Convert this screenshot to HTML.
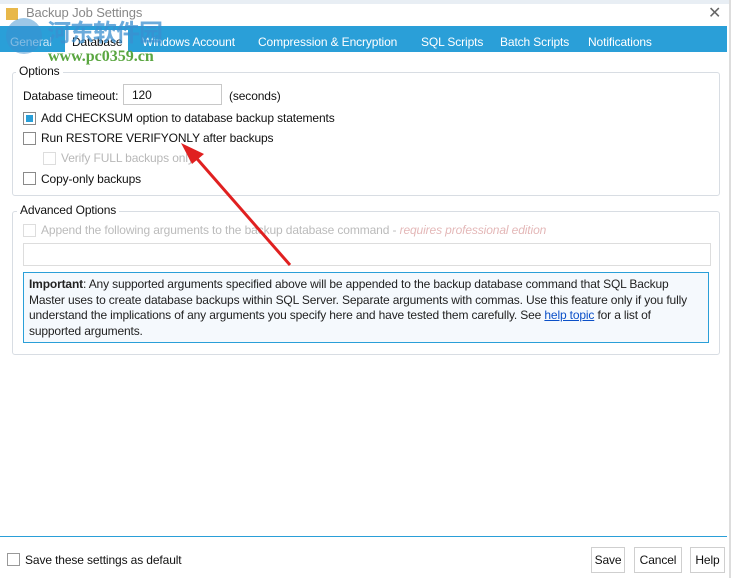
<!DOCTYPE html><html><head><style>
body{margin:0;width:731px;height:578px;background:#fff;font-family:"Liberation Sans","Noto Sans CJK SC",sans-serif;font-size:12px;color:#111;position:relative;overflow:hidden;letter-spacing:-0.12px}
.a{position:absolute;white-space:nowrap}
.cb{position:absolute;width:11px;height:11px;border:1px solid #8a8a8a;background:#fff}
.grp{position:absolute;border:1px solid #d8dde3;border-radius:3px}
.gt{position:absolute;background:#fff;padding:0 3px;font-size:12px}
.btn{position:absolute;top:547px;height:24px;border:1px solid #cfcfcf;background:#fff;text-align:center;line-height:24px;font-size:12px}
.t{font-size:12px}
</style></head><body>
<div class="a" style="left:0;top:0;width:731px;height:4px;background:#e8eef4"></div>
<div class="a" style="left:26px;top:5px;color:#888;font-size:13px">Backup Job Settings</div>
<div class="a" style="left:6px;top:8px;width:12px;height:12px;background:#e8b84a"></div>
<div class="a" style="left:708px;top:3px;font-size:16px;color:#666">✕</div>
<div class="a" style="left:0;top:26px;width:727px;height:26px;background:#2a9fd8"></div>
<div class="a" style="left:65px;top:30px;width:63px;height:22px;background:#fff"></div>
<div class="a t" style="left:10px;top:35px;color:#cfe8f6">General</div>
<div class="a t" style="left:72px;top:35px">Database</div>
<div class="a t" style="left:142px;top:35px;color:#fff">Windows Account</div>
<div class="a t" style="left:258px;top:35px;color:#fff">Compression &amp; Encryption</div>
<div class="a t" style="left:421px;top:35px;color:#fff">SQL Scripts</div>
<div class="a t" style="left:500px;top:35px;color:#fff">Batch Scripts</div>
<div class="a t" style="left:588px;top:35px;color:#fff">Notifications</div>
<div class="a" style="left:47px;top:13px;font-size:24px;font-weight:bold;color:#3b8fd0;opacity:.75;letter-spacing:-1px">河东软件园</div>
<div class="a" style="left:48px;top:48px;font-size:16px;font-weight:bold;color:#5aa640;font-family:'Liberation Serif',serif;letter-spacing:0">www.pc0359.cn</div>
<div class="a" style="left:6px;top:18px;width:36px;height:36px;border-radius:50%;background:#3b8fd0;opacity:.5"></div>
<div class="grp" style="left:12px;top:72px;width:706px;height:122px"></div>
<div class="gt" style="left:16px;top:64px">Options</div>
<div class="a t" style="left:23px;top:89px">Database timeout:</div>
<div class="a" style="left:123px;top:84px;width:99px;height:21px;border:1px solid #c8c8c8;line-height:20px;padding-left:8px;box-sizing:border-box;font-size:12px">120</div>
<div class="a t" style="left:229px;top:89px">(seconds)</div>
<div class="cb" style="left:23px;top:112px"></div><div class="a" style="left:26px;top:115px;width:7px;height:7px;background:#2a9fd8"></div>
<div class="a t" style="left:41px;top:111px">Add CHECKSUM option to database backup statements</div>
<div class="cb" style="left:23px;top:132px"></div>
<div class="a t" style="left:41px;top:131px">Run RESTORE VERIFYONLY after backups</div>
<div class="cb" style="left:43px;top:152px;border-color:#ddd"></div>
<div class="a t" style="left:61px;top:151px;color:#b8b8b8">Verify FULL backups only</div>
<div class="cb" style="left:23px;top:172px"></div>
<div class="a t" style="left:41px;top:172px">Copy-only backups</div>
<div class="grp" style="left:12px;top:211px;width:706px;height:142px"></div>
<div class="gt" style="left:17px;top:203px">Advanced Options</div>
<div class="cb" style="left:23px;top:224px;border-color:#ddd"></div>
<div class="a t" style="left:41px;top:223px;color:#bbb">Append the following arguments to the backup database command - <i style="color:#e4b8b8">requires professional edition</i></div>
<div class="a" style="left:23px;top:243px;width:686px;height:21px;border:1px solid #ddd"></div>
<div class="a" style="left:23px;top:272px;width:684px;height:69px;border:1px solid #2a9fd8;background:#f5f9fd"></div>
<div class="a" style="left:29px;top:277px;font-size:12px;line-height:15.5px;color:#222;letter-spacing:-0.15px"><b>Important</b>: Any supported arguments specified above will be appended to the backup database command that SQL Backup<br>Master uses to create database backups within SQL Server. Separate arguments with commas. Use this feature only if you fully<br>understand the implications of any arguments you specify here and have tested them carefully. See <span style="color:#0b50c8;text-decoration:underline">help topic</span> for a list of<br>supported arguments.</div>
<svg class="a" style="left:0;top:0" width="731" height="578"><line x1="290" y1="265" x2="192" y2="153" stroke="#e02020" stroke-width="3"/><polygon points="181,143 204,154 192,164" fill="#e02020"/></svg>
<div class="a" style="left:0;top:536px;width:727px;height:1px;background:#2a9fd8"></div>
<div class="a" style="left:729px;top:0;width:2px;height:578px;background:#ddd"></div>
<div class="cb" style="left:7px;top:553px;border-color:#999"></div>
<div class="a t" style="left:25px;top:553px">Save these settings as default</div>
<div class="btn" style="left:591px;width:32px">Save</div>
<div class="btn" style="left:634px;width:46px">Cancel</div>
<div class="btn" style="left:690px;width:33px">Help</div>
</body></html>
